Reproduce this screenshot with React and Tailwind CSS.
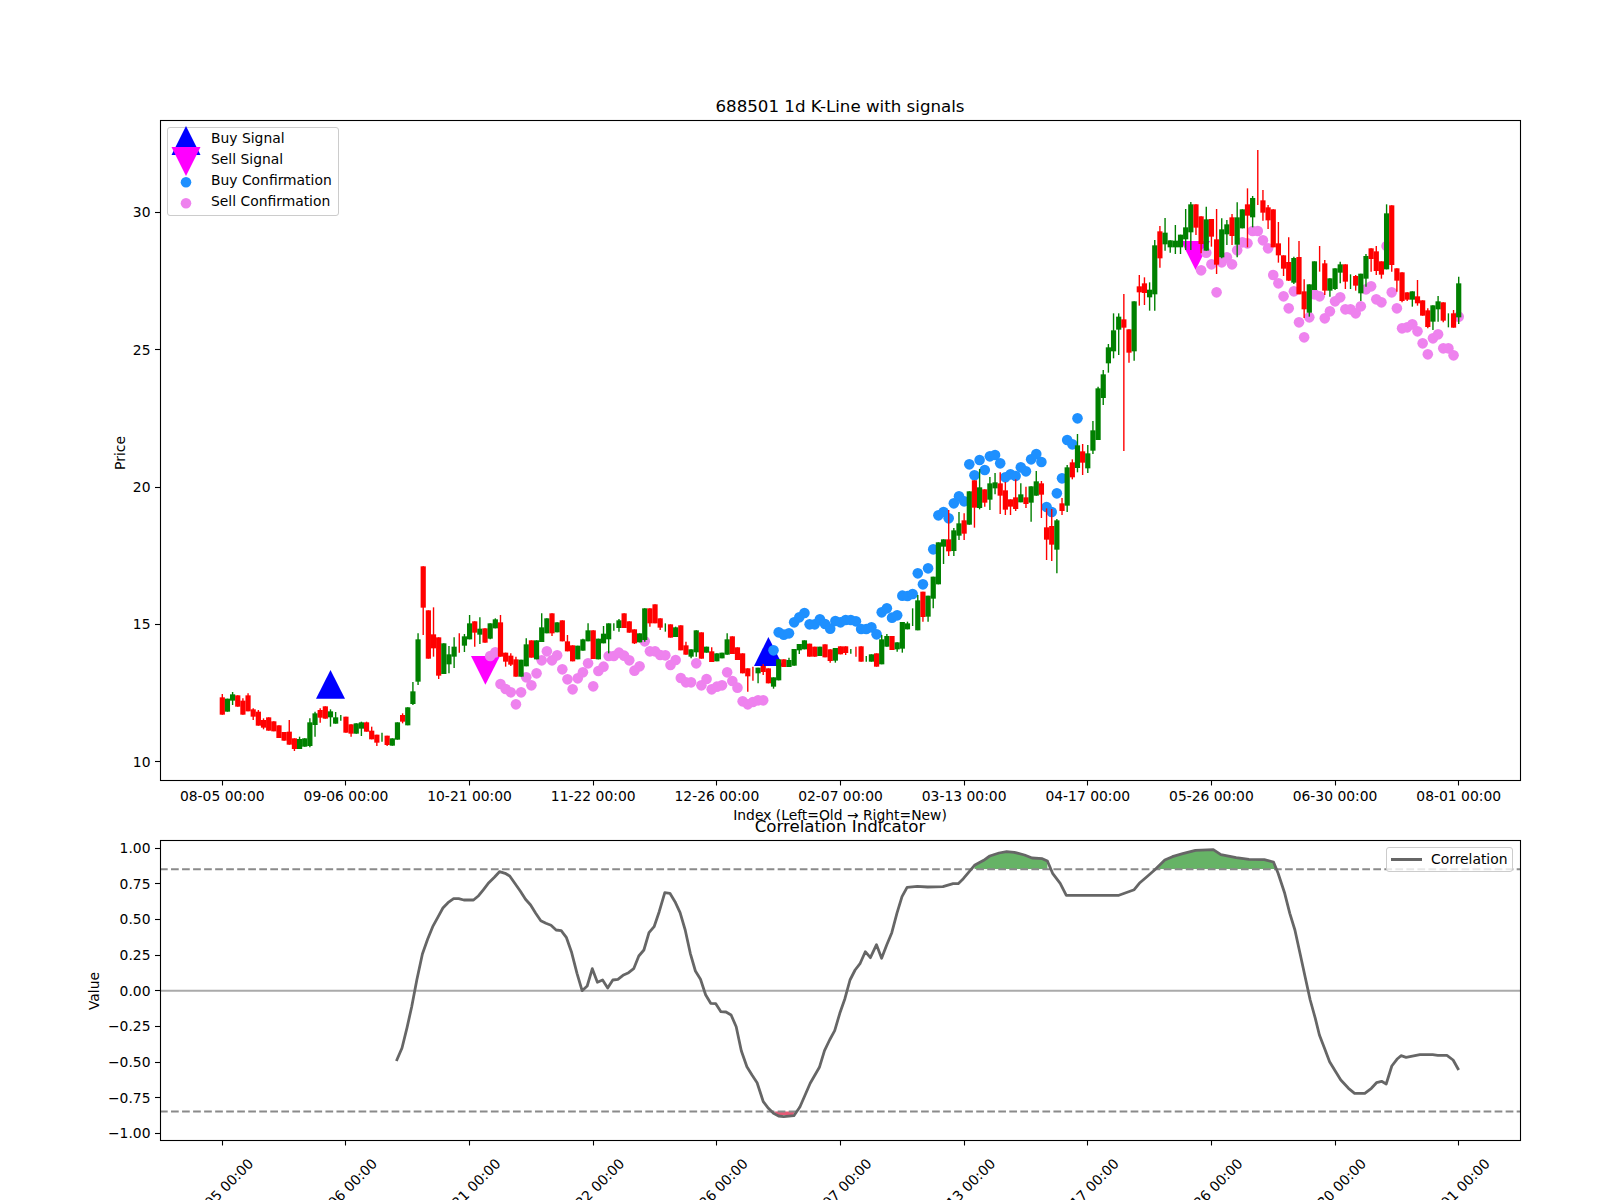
const xOf = (i) => 222.3 + 5.1517 * i;
const snap = (v) => Math.floor(v) + 0.5;

// rows are [colour, bodyTop, bodyBottom, wickTop, wickBottom], read at 3x from a base y
const seg = (start, base, rows) =>
  rows.map(([c, t, b, wt = t, wb = b], k) => ({
    c,
    x: xOf(start + k),
    t: base + t / 3,
    b: base + b / 3,
    wt: base + wt / 3,
    wb: base + wb / 3,
  }));

const dots = (start, base, ys) => ys.map((v, k) => ({ x: xOf(start + k), y: base + v / 3 }));

const candles = [
  ...seg(0, 540, [
    ['r', 472, 524, 462, 524], ['g', 476, 515], ['g', 463, 482, 456, 495], ['r', 466, 500], ['r', 482, 524, 475, 524],
    ['r', 466, 514, 460, 514], ['r', 508, 530, 505, 540], ['r', 515, 557, 510, 557], ['r', 540, 563, 535, 568], ['r', 532, 572],
    ['r', 544, 574], ['r', 556, 594], ['r', 576, 602], ['r', 575, 614, 540, 614], ['r', 595, 627, 595, 633],
    ['g', 597, 627, 590, 627], ['g', 595, 620], ['g', 547, 618, 535, 622], ['g', 520, 555, 515, 590], ['r', 510, 533, 505, 548],
    ['r', 499, 536], ['g', 514, 532, 508, 560], ['g', 532, 551, 516, 551], ['g', 533, 533, 525, 542], ['r', 530, 578],
    ['r', 553, 581, 553, 590], ['g', 550, 581], ['g', 547, 566, 545, 588], ['r', 547, 575, 545, 575], ['r', 572, 598, 560, 598],
    ['r', 584, 608, 584, 618], ['g', 590, 590, 578, 605], ['r', 587, 615, 587, 618], ['g', 595, 617], ['g', 547, 599],
    ['r', 525, 545, 520, 550], ['g', 502, 556], ['g', 454, 492, 426, 495], ['g', 298, 425, 280, 435], ['r', 79, 203, 79, 285],
    ['r', 211, 356], ['r', 283, 325, 202, 350], ['r', 292, 407, 292, 417], ['g', 310, 402], ['g', 343, 373, 318, 400],
    ['g', 320, 350, 292, 384], ['r', 310, 310, 280, 338], ['g', 289, 317, 282, 336], ['g', 250, 298, 225, 298], ['r', 244, 278, 244, 320],
    ['g', 266, 284, 232, 312], ['r', 265, 308], ['g', 250, 296, 250, 298], ['g', 238, 265, 235, 265], ['r', 247, 350, 225, 350],
    ['r', 338, 365, 338, 380], ['r', 347, 374, 340, 378], ['r', 358, 410, 350, 410], ['g', 359, 410], ['g', 313, 379, 295, 379],
    ['r', 301, 353], ['g', 301, 358], ['g', 262, 306, 220, 306], ['g', 235, 280], ['r', 220, 280, 220, 288],
    ['g', 247, 277], ['r', 241, 304], ['r', 304, 334, 285, 334], ['r', 316, 364], ['g', 317, 358],
    ['g', 298, 332, 296, 332], ['g', 271, 304, 250, 304], ['r', 271, 357], ['g', 296, 358],
  ]),
  ...seg(74, 540, [
    ['g', 281, 310, 258, 310], ['g', 250, 298, 250, 340], ['g', 261, 261, 250, 272], ['g', 241, 264, 237, 275], ['r', 220, 264],
    ['r', 244, 278], ['r', 268, 310, 268, 312], ['g', 280, 307], ['g', 205, 300, 205, 305], ['r', 205, 250, 205, 260],
    ['r', 193, 250], ['r', 235, 263, 235, 270], ['g', 262, 262, 250, 275], ['r', 253, 293], ['g', 262, 291, 260, 291],
    ['r', 256, 331], ['r', 316, 344, 305, 344], ['g', 328, 350, 328, 355], ['g', 271, 337, 271, 350], ['r', 277, 356],
    ['g', 320, 338], ['r', 334, 366, 322, 366], ['g', 340, 364], ['g', 338, 355], ['g', 298, 344, 280, 344],
    ['r', 289, 342], ['r', 322, 360], ['r', 340, 400], ['r', 385, 409, 385, 455], ['r', 400, 400, 380, 422],
    ['g', 383, 400, 383, 430], ['r', 378, 396, 372, 405], ['r', 385, 430], ['g', 412, 440, 412, 446], ['g', 358, 421],
    ['r', 358, 381], ['g', 360, 381, 353, 381], ['g', 327, 377], ['g', 312, 331, 312, 342], ['g', 301, 328],
    ['r', 311, 350], ['r', 320, 350], ['g', 320, 348], ['r', 313, 352], ['r', 328, 363, 328, 368],
    ['g', 324, 362, 324, 368], ['r', 319, 343], ['r', 319, 339, 319, 345], ['g', 334, 334, 327, 341], ['r', 335, 335, 320, 350],
    ['r', 319, 365], ['g', 356, 356, 348, 365], ['g', 343, 365], ['r', 340, 380], ['g', 298, 373, 285, 373],
    ['g', 288, 320, 282, 320], ['r', 288, 330], ['g', 307, 328, 307, 335], ['g', 246, 326, 246, 338], ['g', 250, 268, 245, 268],
    ['g', 232, 232, 205, 258], ['g', 181, 271, 165, 271], ['r', 155, 231, 155, 245], ['g', 167, 230, 167, 245], ['g', 110, 176, 110, 205],
  ]),
  ...seg(139, 380, [
    ['g', 487, 613], ['g', 478, 500, 478, 552], ['r', 478, 514, 390, 528], ['g', 451, 513, 444, 528], ['g', 430, 467, 396, 480],
    ['r', 421, 461, 400, 480], ['g', 334, 434], ['r', 301, 383, 301, 443], ['g', 322, 384, 267, 388], ['r', 328, 368, 328, 380],
    ['g', 310, 359, 291, 390], ['g', 307, 325, 279, 343], ['r', 310, 347, 277, 402], ['r', 331, 389, 306, 405], ['r', 358, 380, 358, 405],
    ['r', 352, 387, 298, 393], ['g', 343, 367, 310, 367], ['r', 352, 372, 320, 384], ['g', 319, 368, 319, 425], ['g', 304, 347, 273, 347],
    ['r', 310, 344, 303, 414], ['r', 442, 479, 385, 540], ['r', 438, 494, 387, 543], ['g', 421, 509, 417, 580], ['r', 370, 393, 354, 405],
    ['g', 262, 377, 255, 396], ['r', 247, 292, 238, 298], ['g', 196, 264, 162, 277], ['r', 214, 248, 192, 285], ['g', 220, 265, 195, 279],
    ['g', 151, 212, 123, 222], ['g', 25, 180, 20, 180],
  ]),
  ...seg(171, 140, [
    ['g', 703, 774, 690, 795], ['g', 622, 670, 612, 698], ['g', 571, 634, 520, 655], ['g', 530, 569, 520, 645], ['r', 538, 563, 462, 933],
    ['r', 568, 638, 568, 668], ['g', 484, 634, 484, 662], ['r', 439, 457, 405, 497], ['r', 430, 459, 412, 495], ['g', 449, 472, 427, 512],
    ['g', 316, 463, 300, 512], ['r', 274, 355, 258, 383], ['g', 278, 313, 234, 332], ['g', 301, 322, 301, 338], ['g', 302, 322, 255, 342],
    ['g', 284, 322, 284, 342], ['g', 262, 298, 207, 330], ['g', 193, 277, 186, 330], ['r', 193, 263, 193, 285], ['r', 229, 312, 229, 340],
    ['g', 238, 332, 200, 332], ['r', 237, 290, 237, 320], ['r', 298, 374, 207, 402], ['g', 268, 352, 235, 355], ['g', 253, 283, 240, 315],
    ['r', 232, 288, 222, 315], ['g', 232, 314, 187, 352], ['g', 208, 265], ['r', 193, 227, 145, 322], ['g', 174, 232, 168, 262],
    ['r', 112, 112, 30, 195], ['r', 181, 218, 150, 242], ['r', 202, 241, 195, 267], ['r', 208, 322], ['r', 310, 346, 246, 368],
    ['r', 346, 386, 346, 408], ['r', 366, 422, 292, 423], ['g', 354, 428, 350, 432], ['r', 351, 463, 303, 463], ['r', 454, 508, 418, 534],
    ['g', 433, 518, 433, 530], ['g', 364, 450], ['r', 356, 356, 318, 395], ['r', 370, 452, 360, 465], ['g', 415, 452, 415, 470],
    ['g', 385, 447, 385, 450], ['g', 373, 398, 365, 430], ['r', 373, 425, 373, 447], ['g', 425, 425, 403, 447], ['r', 408, 437, 405, 452],
    ['g', 401, 460, 401, 483], ['g', 348, 416, 342, 440], ['r', 325, 357, 325, 395], ['r', 334, 393, 318, 405], ['r', 364, 404, 364, 416],
    ['g', 220, 388, 193, 388], ['r', 196, 375, 196, 395], ['r', 385, 422, 385, 455], ['r', 397, 483, 397, 487], ['r', 457, 479, 457, 483],
    ['g', 454, 479, 454, 500], ['r', 469, 490, 420, 497], ['r', 481, 527], ['r', 511, 561, 505, 565], ['g', 496, 545, 496, 570],
    ['g', 484, 508, 468, 545], ['r', 487, 542, 487, 547], ['g', 541, 541, 520, 562], ['r', 520, 563, 510, 563], ['g', 430, 532, 410, 552],
  ]),
];

const pink = [
  ...dots(52, 540, [348, 337, 432, 447, 457, 493, 457, 412, 436, 400, 361, 334, 361, 346, 388, 418, 448, 415, 397, 370, 439, 393]),
  ...dots(74, 540, [380, 348, 348, 338, 347, 361, 392, 379, 304, 334, 334, 345, 346, 375, 360, 414, 427, 427, 370, 436, 417, 448, 440, 436, 397, 423, 443, 484, 493, 486, 481, 481]),
  ...dots(190, 140, [391, 338, 373, 457, 367, 352, 373, 331, 307, 310, 273, 273, 301, 325, 405, 430, 469, 505, 454, 547, 592, 532, 463, 469, 535, 514, 484, 472, 508, 508, 520, 499, 448, 439, 478, 487, 318, 457, 505, 565, 562, 553, 574, 610, 643, 595, 583, 625, 625, 646, 530]),
];

const blue = [
  ...dots(107, 540, [331, 277, 284, 280, 247, 232, 219, 253, 253, 238, 252, 266, 243, 247, 240, 240, 244, 267, 267, 262, 283, 217, 205, 233, 226, 167, 168, 162, 100, 133, 85, 28]),
  ...dots(139, 380, [406, 396, 415, 370, 349, 364, 253, 286, 240, 270, 229, 225, 250, 292, 283, 288, 262, 274, 238, 222, 246, 381, 396, 340, 295, 180, 193, 115]),
];

const upSignals = ['316,698.7 345,698.7 330.5,670', '754,666 783,666 768.4,637'];
const downSignals = ['471,656 500,656 485.4,684.7', '1181,241 1210,241 1195.6,270'];

const dateTicks = ['08-05 00:00', '09-06 00:00', '10-21 00:00', '11-22 00:00', '12-26 00:00', '02-07 00:00', '03-13 00:00', '04-17 00:00', '05-26 00:00', '06-30 00:00', '08-01 00:00'];
const priceTicks = [[30, 212.3], [25, 349.6], [20, 487], [15, 624.4], [10, 761.7]];
const corrTicks = [['1.00', 848], ['0.75', 883.6], ['0.50', 919.3], ['0.25', 955], ['0.00', 990.7], ['−0.25', 1026.4], ['−0.50', 1062], ['−0.75', 1097.7], ['−1.00', 1133.4]];

const corrLeft = [[777,843],[788,804],[798,742],[807,680],[817,600],[828,522],[838,478],[848,440],[858,412],[868,384],[878,368],[889,356],[899,356],[909,360],[928,360],[938,347],[948,328],[958,308],[969,292],[979,275],[990,280],[999,288],[1009,310],[1020,334],[1030,358],[1040,375],[1050,400],[1060,422],[1070,430],[1080,436],[1090,450],[1100,452],[1110,472],[1120,515],[1131,580],[1141,632],[1151,618],[1161,566],[1171,607],[1181,600],[1191,624],[1201,600],[1211,598],[1221,586],[1232,578],[1242,566],[1252,528],[1262,510],[1272,458],[1282,440],[1292,395],[1303,338],[1313,340],[1323,365],[1333,398],[1343,450],[1353,520],[1363,573],[1373,598],[1383,644],[1393,670],[1403,671],[1413,695],[1423,696],[1433,705],[1443,740],[1453,812],[1464,860],[1474,885],[1484,908],[1496,965],[1506,985],[1516,1000],[1526,1008],[1536,1010],[1556,1007],[1566,985]];
const corrRight = [[0,980],[10,945],[20,910],[38,862],[48,812],[58,780],[68,752],[78,700],[88,656],[98,600],[108,570],[118,550],[128,515],[138,533],[150,494],[160,535],[170,495],[180,458],[190,400],[200,350],[210,322],[230,319],[250,321],[280,320],[300,311],[310,311],[320,296],[330,278],[342,256],[360,241],[372,228],[390,219],[405,215],[420,217],[440,225],[455,234],[475,236],[485,243],[495,280],[510,310],[522,346],[625,346],[655,329],[665,310],[680,290],[695,270],[715,240],[730,230],[750,221],[775,211],[810,209],[825,224],[855,233],[880,238],[910,239],[928,246],[937,280],[950,340],[960,400],[970,450],[980,520],[990,590],[1000,660],[1010,715],[1018,765],[1028,805],[1038,845],[1050,875],[1060,900],[1075,925],[1087,940],[1107,940],[1120,925],[1130,908],[1140,904],[1149,912],[1160,858],[1170,838],[1178,827],[1188,832],[1215,824],[1240,824],[1250,826],[1268,826],[1280,840],[1291,870]];
const greenA = [[342,267],[342,256],[360,241],[372,228],[390,219],[405,215],[420,217],[440,225],[455,234],[475,236],[485,243],[485,267]];
const greenB = [[700,267],[715,240],[730,230],[750,221],[775,211],[810,209],[825,224],[855,233],[880,238],[910,239],[928,246],[932,267]];

const toPoints = (pts, baseX) => pts.map(([x, y]) => `${(baseX + x / 1.96).toFixed(1)},${(780 + y / 3).toFixed(1)}`).join(' ');

function Marker({ shape }) {
  return (
    <svg viewBox="0 0 30 21" className="w-[30px] h-[21px] ml-[3px] overflow-visible shrink-0">
      {shape === 'up' && <polygon points="0.5,26.9 29.5,26.9 15,-2.1" className="fill-[#0000ff]" />}
      {shape === 'down' && <polygon points="0.5,-2 29.5,-2 15,27" className="fill-[#ff00ff]" />}
      {shape === 'buy' && <circle cx="15" cy="12.3" r="5.3" className="fill-[#1e90ff]" />}
      {shape === 'sell' && <circle cx="15" cy="12.3" r="5.3" className="fill-[#ee82ee]" />}
    </svg>
  );
}

function SignalLegend() {
  const rows = [
    ['up', 'Buy Signal'],
    ['down', 'Sell Signal'],
    ['buy', 'Buy Confirmation'],
    ['sell', 'Sell Confirmation'],
  ];
  return (
    <div className="absolute left-[167px] top-[7px] w-[172px] h-[89px] bg-white/80 border border-[#cccccc] rounded-[3px] flex flex-col">
      {rows.map(([shape, label]) => (
        <div key={label} className="flex items-center h-[21px] shrink-0">
          <Marker shape={shape} />
          <span className="ml-[10px] whitespace-nowrap leading-none">{label}</span>
        </div>
      ))}
    </div>
  );
}

function PricePlot() {
  return (
    <svg viewBox="0 120 1600 660" className="block w-[1600px] h-[660px] overflow-visible">
      {upSignals.map((p) => <polygon key={p} points={p} className="fill-[#0000ff]" />)}
      {downSignals.map((p) => <polygon key={p} points={p} className="fill-[#ff00ff]" />)}
      {pink.map((d, i) => <circle key={i} cx={d.x} cy={d.y} r="5.3" className="fill-[#ee82ee]" />)}
      {blue.map((d, i) => <circle key={i} cx={d.x} cy={d.y} r="5.3" className="fill-[#1e90ff]" />)}
      {candles.map((k, i) => (
        <g key={i} className={k.c === 'r' ? 'fill-[#ff0000] stroke-[#ff0000]' : 'fill-[#008000] stroke-[#008000]'}>
          <line x1={k.x} x2={k.x} y1={k.wt} y2={k.wb} strokeWidth="1.4" />
          {k.b > k.t && <rect x={k.x - 2.6} y={k.t} width="5.2" height={k.b - k.t} strokeWidth="0" />}
        </g>
      ))}
      <rect x="160.5" y="120.5" width="1360" height="660" fill="none" className="stroke-black" strokeWidth="1.1" />
      {dateTicks.map((t, i) => (
        <g key={t}>
          <line x1={snap(xOf(i * 24))} x2={snap(xOf(i * 24))} y1="780" y2="785.5" className="stroke-black" strokeWidth="1.1" />
          <text x={xOf(i * 24)} y="801" textAnchor="middle" className="fill-black">{t}</text>
        </g>
      ))}
      {priceTicks.map(([v, y]) => (
        <g key={v}>
          <line x1="155" x2="160" y1={snap(y)} y2={snap(y)} className="stroke-black" strokeWidth="1.1" />
          <text x="150.5" y={y + 5} textAnchor="end" className="fill-black">{v}</text>
        </g>
      ))}
      <text transform="translate(124.5 453) rotate(-90)" textAnchor="middle" className="fill-black">Price</text>
      <text x="840" y="820" textAnchor="middle" className="fill-black">Index (Left=Old → Right=New)</text>
    </svg>
  );
}

function CorrelationPlot() {
  return (
    <svg viewBox="0 840 1600 300" className="block w-[1600px] h-[300px] overflow-visible">
      <polygon points={toPoints(greenA, 800)} className="fill-[#008000]" opacity="0.6" />
      <polygon points={toPoints(greenB, 800)} className="fill-[#008000]" opacity="0.6" />
      <polygon points="774,1111.5 795,1111.5 793,1115 778,1115" className="fill-[#dc143c]" opacity="0.7" />
      <line x1="160" x2="1520" y1="990.7" y2="990.7" className="stroke-[#aaaaaa]" strokeWidth="2" />
      <line x1="160" x2="1520" y1="869.2" y2="869.2" className="stroke-[#8a8a8a]" strokeWidth="2.08" strokeDasharray="7.7 3.33" />
      <line x1="160" x2="1520" y1="1111.5" y2="1111.5" className="stroke-[#8a8a8a]" strokeWidth="2.08" strokeDasharray="7.7 3.33" />
      <polyline points={`${toPoints(corrLeft, 0)} ${toPoints(corrRight, 800)}`} fill="none" className="stroke-[#666666]" strokeWidth="2.78" strokeLinejoin="round" />
      <rect x="160.5" y="840.5" width="1360" height="300" fill="none" className="stroke-black" strokeWidth="1.1" />
      {dateTicks.map((t, i) => (
        <g key={t}>
          <line x1={snap(xOf(i * 24))} x2={snap(xOf(i * 24))} y1="1140" y2="1145.5" className="stroke-black" strokeWidth="1.1" />
          <text transform={`translate(${xOf(i * 24) - 1.5} 1191) rotate(-45)`} y="5" textAnchor="middle" className="fill-black">{t}</text>
        </g>
      ))}
      {corrTicks.map(([v, y]) => (
        <g key={v}>
          <line x1="155" x2="160" y1={snap(y)} y2={snap(y)} className="stroke-black" strokeWidth="1.1" />
          <text x="150.5" y={y + 5} textAnchor="end" className="fill-black">{v}</text>
        </g>
      ))}
      <text transform="translate(99 991) rotate(-90)" textAnchor="middle" className="fill-black">Value</text>
    </svg>
  );
}

export default function App() {
  return (
    <div className="w-[1600px] h-[1200px] overflow-hidden bg-white flex flex-col text-black text-[13.89px] font-['DejaVu_Sans',sans-serif]">
      <div className="h-[120px] shrink-0 pl-[160px] pr-[80px] pb-[3px] flex items-end justify-center text-[16.67px] leading-[20px]">
        688501 1d K-Line with signals
      </div>
      <div className="relative h-[660px] shrink-0">
        <PricePlot />
        <SignalLegend />
      </div>
      <div className="relative z-10 h-[60px] shrink-0 pl-[160px] pr-[80px] pb-[3px] flex items-end justify-center text-[16.67px] leading-[20px]">
        Correlation Indicator
      </div>
      <div className="relative h-[300px] shrink-0">
        <CorrelationPlot />
        <div className="absolute left-[1386px] top-[7px] w-[127px] h-[25px] bg-white/80 border border-[#cccccc] rounded-[3px] flex items-center pl-[4px]">
          <div className="w-[31px] h-[3px] bg-[#666666] shrink-0" />
          <span className="ml-[9px] whitespace-nowrap leading-none">Correlation</span>
        </div>
      </div>
    </div>
  );
}
